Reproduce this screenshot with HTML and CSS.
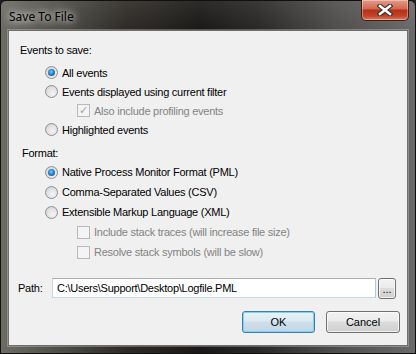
FILE: index.html
```html
<!DOCTYPE html>
<html lang="en">
<head>
    <meta charset="UTF-8">
    <title>Save To File</title>
    <link rel="stylesheet" href="styles.css">
</head>
<body>

    <div class="window">
        <div class="titlebar">
            <span class="title">Save To File</span>
            <button class="close-button" aria-label="Close">
                <svg width="16" height="12" viewBox="0 0 16 12">
                    <path d="M3 2 L13 10 M13 2 L3 10" stroke="#2b2b2b" stroke-width="4.6" stroke-linecap="square"/>
                    <path d="M3 2 L13 10 M13 2 L3 10" stroke="#ffffff" stroke-width="2.6" stroke-linecap="square"/>
                </svg>
            </button>
        </div>

        <div class="client">
            <div class="group-label">Events to save:</div>
            <div class="option tight"><span class="radio checked"></span>All events</div>
            <div class="option tight"><span class="radio"></span>Events displayed using current filter</div>
            <div class="option tight sub disabled"><span class="checkbox checked"></span>Also include profiling events</div>
            <div class="option tight"><span class="radio"></span>Highlighted events</div>

            <div class="group-label format-label">Format:</div>
            <div class="option"><span class="radio checked"></span>Native Process Monitor Format (PML)</div>
            <div class="option"><span class="radio"></span>Comma-Separated Values (CSV)</div>
            <div class="option"><span class="radio"></span>Extensible Markup Language (XML)</div>
            <div class="option sub disabled"><span class="checkbox"></span>Include stack traces (will increase file size)</div>
            <div class="option sub disabled"><span class="checkbox"></span>Resolve stack symbols (will be slow)</div>

            <div class="path-row">
                <label class="path-label" for="pathInput">Path:</label>
                <input id="pathInput" class="path-input" type="text" value="C:\Users\Support\Desktop\Logfile.PML">
                <button class="browse-button">...</button>
            </div>

            <div class="button-row">
                <button class="push-button default">OK</button>
                <button class="push-button">Cancel</button>
            </div>
        </div>
    </div>

</body>
</html>
```

FILE: styles.css
```css
:root {
    --font-ui: 'Liberation Sans', Arial, sans-serif;
    --font-title: 'Noto Sans', 'Open Sans', sans-serif;
    --dialog-bg: #f0f0f0;
    --text-color: #000000;
    --disabled-text: #838383;
}

html, body {
    margin: 0;
    background: #1e1e1e;
}

.window {
    width: 416px;
    height: 354px;
    box-sizing: border-box;
    border-radius: 6px 6px 0 0;
    background:
        linear-gradient(to bottom, rgba(255, 255, 255, 0.08), rgba(255, 255, 255, 0) 30px),
        linear-gradient(to right, #6c6b64 0%, #57564f 10%, #2e2b27 30%, #1b1917 48%, #2a2826 62%, #4d4c4a 80%, #6a6a6a 100%);
    border: 1px solid #101010;
    display: flex;
    flex-direction: column;
}

.titlebar {
    height: 29px;
    display: flex;
    align-items: flex-start;
}

.title {
    font-family: var(--font-title);
    font-size: 12px;
    color: #000;
    margin: 7px 0 0 8px;
    text-shadow: 0 0 7px #ffffff, 0 0 12px rgba(255, 255, 255, 0.7);
}

.close-button {
    margin: -1px 6px 0 auto;
    width: 48px;
    height: 21px;
    padding: 0;
    border: 1px solid #4a1a12;
    border-top: none;
    border-radius: 0 0 5px 5px;
    background: linear-gradient(to bottom, #e39c88 0%, #d0684f 45%, #b82e16 50%, #c2442a 80%, #dc7c5e 100%);
    box-shadow: inset 0 0 0 1px rgba(255, 255, 255, 0.35);
    display: flex;
    justify-content: center;
    align-items: center;
}

.client {
    margin: 0 7px 7px 7px;
    flex: 1;
    background: var(--dialog-bg);
    border: 1px solid #6e6e6e;
    box-shadow: 0 0 0 1px rgba(255, 255, 255, 0.25);
    padding: 10px 7px 0 11px;
    font-family: var(--font-ui);
    font-size: 11px;
    letter-spacing: -0.25px;
    color: var(--text-color);
    display: flex;
    flex-direction: column;
}

.group-label {
    height: 18px;
    line-height: 18px;
}

.format-label {
    margin: 5px 0 0 2px;
}

.option {
    height: 20px;
    display: flex;
    align-items: center;
    padding-left: 25px;
}

.option.tight {
    height: 19px;
}

.group-label + .option.tight {
    margin-top: 4px;
}

.option.sub {
    padding-left: 57px;
}

.option.disabled {
    color: var(--disabled-text);
}

.radio {
    width: 11px;
    height: 11px;
    border: 1px solid #8e8f8f;
    border-radius: 50%;
    background: radial-gradient(circle at 60% 65%, #f4f4f4 0%, #e2e2e2 50%, #cfcfcf 100%);
    margin-right: 4px;
    flex-shrink: 0;
    display: flex;
    justify-content: center;
    align-items: center;
}

.radio.checked::after {
    content: "";
    width: 7px;
    height: 7px;
    border-radius: 50%;
    background: radial-gradient(circle at 45% 40%, #7fd0ff 0%, #2a8ad6 40%, #0d3f78 100%);
}

.checkbox {
    width: 11px;
    height: 11px;
    border: 1px solid #b9b9b9;
    background: #f4f4f4;
    margin-right: 4px;
    flex-shrink: 0;
    display: flex;
    justify-content: center;
    align-items: center;
    font-size: 11px;
    line-height: 11px;
    color: #a3a3a3;
}

.checkbox.checked::after {
    content: "\2713";
    font-family: 'DejaVu Sans', sans-serif;
}

.path-row {
    display: flex;
    align-items: center;
    margin-top: 15px;
    height: 22px;
}

.path-label {
    width: 34px;
    margin-left: -2px;
}

.path-input {
    width: 324px;
    height: 20px;
    box-sizing: border-box;
    margin: 0 2px 0 0;
    padding: 0 4px;
    border: 1px solid #abadb3;
    border-color: #abadb3 #a9cbea #c3d8ee #c7d5e4;
    background: #ffffff;
    font-family: var(--font-ui);
    font-size: 11px;
    letter-spacing: -0.25px;
    color: #000;
}

.browse-button {
    width: 18px;
    height: 21px;
    padding: 0;
    border: 1px solid #707070;
    border-radius: 3px;
    background: linear-gradient(to bottom, #f2f2f2 0%, #ebebeb 45%, #dddddd 50%, #cfcfcf 100%);
    box-shadow: inset 0 0 0 1px rgba(255, 255, 255, 0.7);
    font-family: var(--font-ui);
    font-size: 11px;
    line-height: 21px;
    color: #000;
}

.button-row {
    display: flex;
    justify-content: flex-end;
    gap: 11px;
    margin-top: 12px;
}

.push-button {
    width: 73px;
    height: 22px;
    padding: 0;
    border: 1px solid #707070;
    border-radius: 3px;
    background: linear-gradient(to bottom, #f2f2f2 0%, #ebebeb 45%, #dddddd 50%, #cfcfcf 100%);
    box-shadow: inset 0 0 0 1px rgba(255, 255, 255, 0.7);
    font-family: var(--font-ui);
    font-size: 11px;
    color: #000;
}

.push-button.default {
    border-color: #3c7fb1;
    background: linear-gradient(to bottom, #e8f3f9 0%, #dbe9f2 45%, #cfdfea 50%, #c3d6e3 100%);
    box-shadow: inset 0 0 0 1px #7fd2f7;
}

.push-button:last-child {
    width: 74px;
}
```
